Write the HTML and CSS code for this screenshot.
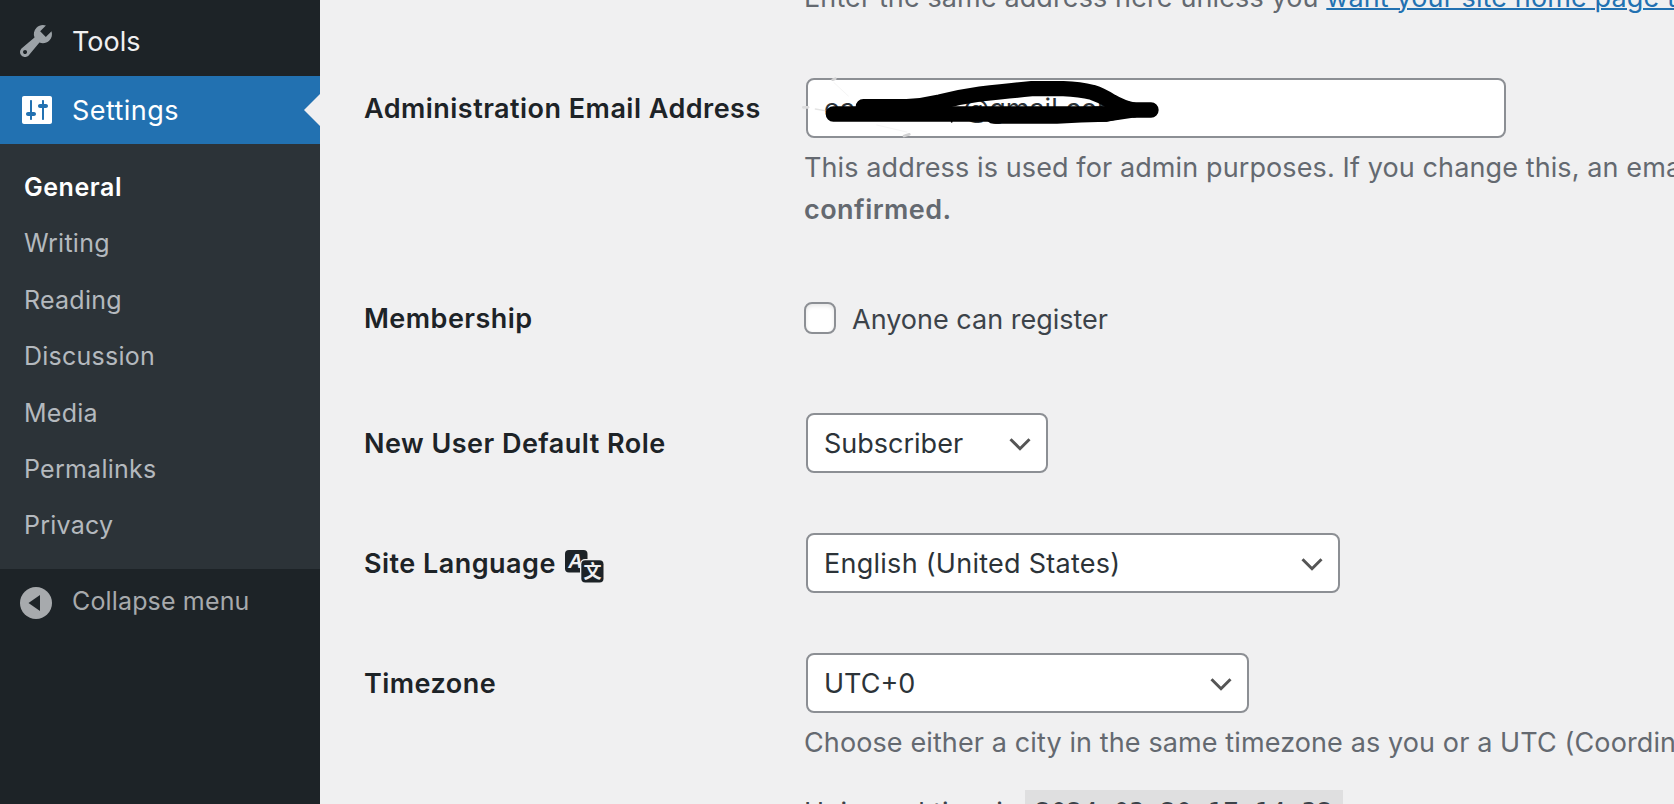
FILE: index.html
```html
<!DOCTYPE html>
<html lang="en">
<head>
<meta charset="utf-8">
<title>General Settings</title>
<link rel="stylesheet" href="styles.css">
</head>
<body>
<div class="admin">
  <nav class="sidebar">
    <a class="menu-item tools">
      <svg class="menu-icon" viewBox="0 0 20 20"><path fill="#9ca2a7" d="M16.68 9.77c-1.34 1.34-3.3 1.67-4.95.99l-5.41 6.52c-.99.99-2.59.99-3.58 0s-.99-2.59 0-3.57l6.52-5.42c-.68-1.65-.35-3.61.99-4.95 1.28-1.28 3.12-1.62 4.72-1.06l-2.89 2.89 2.82 2.82 2.86-2.87c.53 1.58.18 3.39-1.08 4.65zM3.81 16.21c.4.39 1.04.39 1.43 0 .4-.4.4-1.04 0-1.43-.39-.4-1.03-.4-1.43 0-.39.39-.39 1.03 0 1.43z"/></svg>
      <span>Tools</span>
    </a>
    <a class="menu-item current">
      <svg class="menu-icon" viewBox="0 0 20 20"><path fill="#fff" d="M18 16V4c0-.55-.45-1-1-1H4c-.55 0-1 .45-1 1v12c0 .55.45 1 1 1h13c.55 0 1-.45 1-1zM8 11h1c.55 0 1 .45 1 1s-.45 1-1 1H8v1.5c0 .28-.22.5-.5.5s-.5-.22-.5-.5V13H6c-.55 0-1-.45-1-1s.45-1 1-1h1V5.5c0-.28.22-.5.5-.5s.5.22.5.5V11zm5-2h-1c-.55 0-1-.45-1-1s.45-1 1-1h1V5.5c0-.28.22-.5.5-.5s.5.22.5.5V7h1c.55 0 1 .45 1 1s-.45 1-1 1h-1v5.5c0 .28-.22.5-.5.5s-.5-.22-.5-.5V9z"/></svg>
      <span>Settings</span>
    </a>
    <div class="submenu">
      <a class="active">General</a>
      <a>Writing</a>
      <a>Reading</a>
      <a>Discussion</a>
      <a>Media</a>
      <a>Permalinks</a>
      <a>Privacy</a>
    </div>
    <a class="menu-item collapse">
      <svg class="menu-icon" viewBox="0 0 40 40"><circle cx="20" cy="20" r="16" fill="#a7aaad"/><path fill="#1d2327" d="M12.5 20 24 12v16z"/></svg>
      <span>Collapse menu</span>
    </a>
  </nav>
  <main class="content">
    <p class="desc first">Enter the same address here unless you <a class="link">want your site home page to be different</a></p>

    <section class="row email">
      <label class="label">Administration Email Address</label>
      <div class="field">
        <div class="control email-input">
          <span>ea</span><span class="domain">@gmail.com</span>
          <svg class="scribble" viewBox="0 0 1200 270">
            <g fill="none" stroke="#000" stroke-linecap="round" stroke-linejoin="round">
              <path stroke-width="46" d="M160 162H980L1060 150H1113"/>
              <path stroke-width="46" d="M250 140H380Q430 138 480 126Q540 110 600 102Q690 92 755 86H850Q900 88 937 97Q965 106 995 125Q1025 143 1060 150"/>
              <path stroke-width="46" d="M250 148L490 150M640 168H830Q900 164 980 162Q1010 158 1040 146"/>
              <path stroke-width="5" d="M515 183V186"/>
            </g>
            <g fill="none" stroke-linecap="round">
              <path stroke-width="8" stroke="#d2d2d3" d="M158 59l8-3M372 228l16-5"/>
              <path stroke-width="3" stroke="#f5f5f5" d="M162 68L205 108M290 195L380 216"/>
              <path stroke-width="8" stroke="#dcdcdd" d="M70 142H84"/>
              <path stroke-width="4" stroke="#e4e4e4" d="M106 147L134 152"/>
            </g>
          </svg>
        </div>
        <p class="desc">This address is used for admin purposes. If you change this, an email will be sent to your new address</p>
        <p class="desc"><strong>confirmed.</strong></p>
      </div>
    </section>

    <section class="row membership">
      <label class="label">Membership</label>
      <div class="field check"><span class="checkbox"></span><span class="check-text">Anyone can register</span></div>
    </section>

    <section class="row role">
      <label class="label">New User Default Role</label>
      <div class="field"><div class="control select role-select"><span>Subscriber</span><svg class="chevron" viewBox="0 0 32 32"><path d="M6.5 12.2 16 21.7 25.5 12.2"/></svg></div></div>
    </section>

    <section class="row language">
      <label class="label">Site Language
        <svg class="translate" viewBox="0 0 40 34">
          <rect x="0" y="0" width="22.5" height="22.5" rx="4" fill="#1d2327"/>
          <text class="latin" x="10.5" y="18">A</text>
          <rect x="15" y="9" width="25" height="25" rx="5" fill="#f0f0f1"/>
          <rect x="16.3" y="10.3" width="22.2" height="22.2" rx="4" fill="#1d2327"/>
          <text class="han" x="27.4" y="28.4">文</text>
        </svg>
      </label>
      <div class="field"><div class="control select language-select"><span class="wide">English (United States)</span><svg class="chevron" viewBox="0 0 32 32"><path d="M6.5 12.2 16 21.7 25.5 12.2"/></svg></div></div>
    </section>

    <section class="row timezone">
      <label class="label">Timezone</label>
      <div class="field">
        <div class="control select timezone-select"><span>UTC+0</span><svg class="chevron" viewBox="0 0 32 32"><path d="M6.5 12.2 16 21.7 25.5 12.2"/></svg></div>
        <p class="desc">Choose either a city in the same timezone as you or a UTC (Coordinated Universal Time) time offset.</p>
        <p class="universal">Universal time is <code>2024-03-20 17:14:32</code></p>
      </div>
    </section>
  </main>
</div>
</body>
</html>
```

FILE: styles.css
```css
* { box-sizing: border-box; }

body {
  margin: 0;
  background: #f0f0f1;
  color: #3c434a;
  font-family: Inter, "Liberation Sans", sans-serif;
  font-size: 27px;
  overflow: hidden;
}

p { margin: 0; }

.admin { display: flex; height: 804px; overflow: hidden; }

.sidebar { width: 320px; flex: none; background: #1d2327; }

.menu-item {
  display: flex;
  align-items: center;
  gap: 16px;
  height: 68px;
  padding-left: 16px;
  color: #f0f0f1;
}

.menu-icon { width: 40px; height: 40px; flex: none; }
.tools { height: 76px; padding-top: 6px; }

.current {
  position: relative;
  background: #2271b1;
  color: #fff;
  letter-spacing: .45px;
}

.current::after {
  content: "";
  position: absolute;
  right: 0;
  top: 18px;
  border: 16px solid transparent;
  border-left: 0;
  border-right-color: #f0f0f1;
}

.submenu {
  height: 425px;
  padding-top: 15px;
  background: #2c3338;
  font-size: 25px;
  letter-spacing: .25px;
}

.submenu a {
  display: block;
  height: 56.4px;
  padding-left: 24px;
  line-height: 56.4px;
  color: #b4b9be;
}

.submenu .active { color: #fff; font-weight: 600; letter-spacing: .55px; }

.collapse { color: #a7aaad; font-size: 25px; letter-spacing: .15px; }
.collapse span { padding-bottom: 4px; }

.content {
  flex: 1;
  min-width: 0;
  padding-left: 44px;
  overflow: hidden;
}

.desc {
  height: 42px;
  line-height: 42px;
  color: #646970;
  letter-spacing: .11px;
  white-space: nowrap;
}

.desc strong { font-weight: 600; letter-spacing: .45px; }
.first { margin: -23px 0 59px 440px; }
.link { color: #2271b1; text-decoration: underline; text-decoration-thickness: 2px; }

.row { display: flex; align-items: flex-start; }

.label {
  width: 440px;
  flex: none;
  display: flex;
  align-items: center;
  height: 60px;
  color: #1d2327;
  font-weight: 600;
  letter-spacing: .47px;
  white-space: nowrap;
}

.field { flex: 1; min-width: 0; }

.control {
  position: relative;
  display: flex;
  align-items: center;
  height: 60px;
  margin-left: 2px;
  padding-left: 16px;
  border: 2px solid #8c8f94;
  border-radius: 8px;
  background: #fff;
  color: #2c3338;
  white-space: nowrap;
}

.email { height: 210px; }
.email-input { width: 700px; margin-bottom: 9px; }
.domain { margin-left: 108px; }

.scribble {
  position: absolute;
  left: -28px;
  top: -20px;
  width: 400px;
  height: 90px;
}

.membership { height: 125px; }
.check { display: flex; align-items: center; gap: 16px; height: 60px; }
.check-text { padding-top: 3px; }

.checkbox {
  width: 32px;
  height: 32px;
  border: 2px solid #8c8f94;
  border-radius: 8px;
  background: #fff;
  box-shadow: inset 0 2px 4px rgba(0, 0, 0, .1);
}

.role, .language { height: 120px; }
.select { justify-content: space-between; padding-right: 10px; }
.wide { letter-spacing: .26px; }
.chevron { width: 32px; height: 32px; fill: none; stroke: #555; stroke-width: 3; }
.role-select { width: 242px; }
.language-select { width: 534px; }
.timezone-select { width: 443px; margin-bottom: 9px; }

.translate { width: 40px; height: 34px; margin: 7px 0 0 9px; }
.latin { font: italic 700 20px "Liberation Sans", sans-serif; fill: #f0f0f1; text-anchor: middle; letter-spacing: 0; }
.han { font: 700 18px "Noto Sans CJK SC", sans-serif; fill: #f0f0f1; text-anchor: middle; letter-spacing: 0; }

.universal { margin-top: 26px; line-height: 46px; letter-spacing: .22px; white-space: nowrap; }

code {
  display: inline-block;
  padding: 0 10px;
  background: #dfdfe0;
  font: 26px/46px "DejaVu Sans Mono", monospace;
  letter-spacing: 0;
}
```
